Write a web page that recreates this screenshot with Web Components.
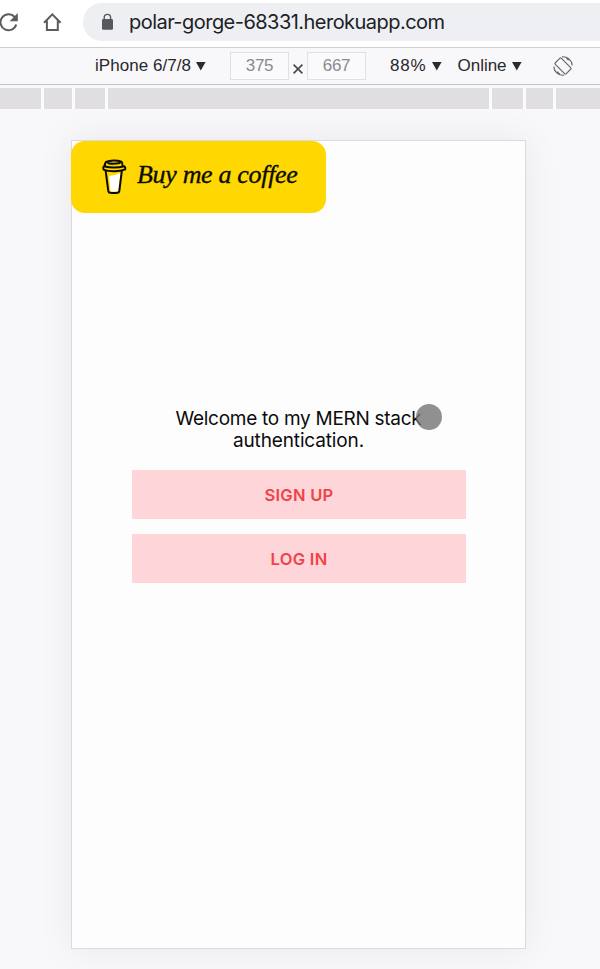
<!DOCTYPE html>
<html lang="en">
<head>
<meta charset="utf-8">
<title>MERN stack authentication</title>
<style>
html,body{margin:0;height:100%;overflow:hidden;background:#f8f7fa}
body{font-family:Inter,"Liberation Sans",sans-serif}
</style>
</head>
<body>
<app-window></app-window>
<script>
const define = (name, html, Base = HTMLElement) => customElements.define(name, class extends Base {
  constructor() {
    super();
    const t = document.createElement('template');
    t.innerHTML = html;
    this.attachShadow({ mode: 'open' }).append(t.content.cloneNode(true));
  }
});

// One line of text whose letter spacing is set so that it fills the "w" attribute's width.
customElements.define('fit-text', class extends HTMLElement {
  constructor() {
    super();
    this.attachShadow({ mode: 'open' }).innerHTML =
      '<style>:host{display:block;white-space:nowrap;flex:none}span{display:inline-block}</style><span><slot></slot></span>';
  }
  connectedCallback() {
    const w = +this.getAttribute('w');
    const span = this.shadowRoot.querySelector('span');
    const n = this.textContent.length;
    const gap = (w - span.getBoundingClientRect().width) / n;
    this.style.width = w + 'px';
    span.style.letterSpacing = gap.toFixed(3) + 'px';
  }
});

define('address-bar', `
<style>
:host{display:flex;height:47px;background:#fff;box-sizing:border-box;overflow:hidden}
svg{display:block;flex:none}
.pill{margin:3px 0 0 1px;height:38px;flex:1;background:#edeff3;border-radius:19px 0 0 19px;display:flex;padding-left:16px}
fit-text{margin:4px 0 0 12px;font-size:20px;line-height:31px;color:#202124}
</style>
<svg width="82" height="47" fill="none" stroke="#5b5c60" stroke-width="2">
  <path d="M14.6 17.1A8 8 0 1 0 16.2 24.4"/>
  <path d="M17.8 13v8.2H9.7z" fill="#5b5c60" stroke="none"/>
  <path d="M44 22.8 52.3 14.4l8.3 8.4M46.9 20.8v9.2h10.9v-9.2"/>
</svg>
<div class="pill">
  <svg width="18" height="38"><path d="M5.2 17.5v-2.3a3.2 3.2 0 0 1 6.4 0v2.3" transform="translate(0 -.6)" fill="none" stroke="#57585c" stroke-width="1.4"/><rect x="3" y="16" width="11" height="10.8" rx="1.2" fill="#57585c"/></svg>
  <fit-text w="315.5">polar-gorge-68331.herokuapp.com</fit-text>
</div>`);

define('drop-down', `
<style>
:host{display:flex;align-items:center;gap:5px;height:36px}
svg{display:block}
</style>
<slot></slot>
<svg width="10" height="9"><path d="M0 0h9.6L4.8 8.6z" fill="#2b2b2e"/></svg>`);

define('size-field', `
<style>
:host{display:flex;justify-content:center;align-items:center;box-sizing:border-box;width:59px;height:28px;border:1px solid #e1e1e5;background:#faf9fc;color:#8b8b8f}
</style><slot></slot>`);

define('device-bar', `
<style>
:host{display:flex;align-items:center;box-sizing:border-box;height:38px;border-top:1px solid #cfced2;border-bottom:1px solid #c2c1c5;background:#f8f7fa;padding-left:95px;font:17px "Liberation Sans",sans-serif;color:#28282b}
svg{display:block;flex:none}
.x{margin:5px 4px 0 4px}
</style>
<drop-down><fit-text w="96">iPhone 6/7/8</fit-text></drop-down>
<size-field style="margin-left:24px"><fit-text w="27.5">375</fit-text></size-field>
<svg class="x" width="10" height="10"><path d="M.6.6l8.8 8.8M9.4.6.6 9.4" stroke="#48484b" stroke-width="1.6"/></svg>
<size-field><fit-text w="27.5">667</fit-text></size-field>
<drop-down style="margin-left:24px"><fit-text w="36.5">88%</fit-text></drop-down>
<drop-down style="margin-left:16px"><fit-text w="49">Online</fit-text></drop-down>
<svg width="22" height="22" viewBox="-11 -11 22 22" style="margin-left:30.3px" fill="none" stroke="#67676b" stroke-width="1.2">
  <rect x="-4.3" y="-7.7" width="8.6" height="15.4" rx="1.2" transform="rotate(-45)"/>
  <path d="M-1-9.2A9.2 9.2 0 0 1 9.2-.6M1 9.2A9.2 9.2 0 0 1-9.2.6M3-8.6l2.6 3M-3 8.6l-2.6-3"/>
</svg>`);

define('media-ruler', `
<style>
:host{display:grid;grid-template-columns:41px 28px 30px 381px 31px 27px 1fr;column-gap:3px;height:21px;margin-top:3px;overflow:hidden;background:#fbfafc}
i{background:#e0dee1}
</style><i></i><i></i><i></i><i></i><i></i><i></i><i></i>`);

define('coffee-button', `
<style>
:host{display:flex;box-sizing:border-box;width:255px;height:72px;border-radius:14px;background:#fed800;padding:16px 0 0 29px;margin-left:-1px;color:#0c0b04}
svg{display:block;flex:none}
fit-text{font:italic 26px "Z003","URW Chancery L","Liberation Serif",serif;line-height:36px;margin-left:8px;-webkit-text-stroke:.35px #0c0b04}
</style>
<svg width="29" height="40" fill="none" stroke="#0c0b04" stroke-width="2" stroke-linejoin="round" stroke-linecap="round">
  <path d="M9 19q6-.5 11.500-3l-2 18.500H10.500z" fill="#fff" stroke="none"/>
  <path d="M5.700 14.200 8.300 34q.3 1.700 1.800 1.800 4 .4 7.400 0 1.500-.1 1.800-1.800l2.500-19.800"/>
  <path d="M3.800 9.300q-1 1.800-.2 3.300c5.500 2.300 16 2.100 21.600-.2q.6-1.900-.8-3.200c-6 1.600-15 1.500-20.600.1zM5 9q-.5-2.200 1-4C10 3 17 3 21.400 4.700q1.700 2 1 4.200M8.300 6.200c4 .9 7.500.6 11.500-.2"/>
</svg>
<fit-text w="160.500">Buy me a coffee</fit-text>`);

define('action-button', `
<style>
:host{display:flex;justify-content:center;align-items:center;height:49px;background:#fed5d9;color:#f04349;font:600 16.5px Inter,sans-serif}
</style><slot></slot>`);

define('touch-pointer', `
<style>:host{position:absolute;left:344px;top:263px;width:26px;height:26px;border-radius:50%;background:rgba(116,116,116,.8)}</style>`);

define('welcome-panel', `
<style>
:host{display:flex;flex-direction:column;width:334px;margin:195px 0 0 60px;color:#0b0b0c;font-size:19px;line-height:22px}
.copy{display:flex;flex-direction:column;align-items:center;margin-bottom:18px}
.copy fit-text{margin-right:1px}
action-button+action-button{margin-top:15px}
</style>
<div class="copy"><fit-text w="246">Welcome to my MERN stack</fit-text><fit-text w="131">authentication.</fit-text></div>
<action-button><fit-text w="69">SIGN UP</fit-text></action-button>
<action-button><fit-text w="57">LOG IN</fit-text></action-button>`);

define('phone-screen', `
<style>
:host{display:block;position:relative;box-sizing:border-box;width:455px;height:809px;margin:31px 0 0 71px;border:1px solid #dbdade;background:#fefdfe;box-shadow:0 0 34px rgba(0,0,0,.065)}
</style>
<coffee-button></coffee-button>
<welcome-panel></welcome-panel>
<touch-pointer></touch-pointer>`);

define('app-window', `
<style>:host{display:flex;flex-direction:column;width:600px;height:969px;overflow:hidden;background:#f8f7fa}</style>
<address-bar></address-bar>
<device-bar></device-bar>
<media-ruler></media-ruler>
<phone-screen></phone-screen>`);
</script>
</body>
</html>
